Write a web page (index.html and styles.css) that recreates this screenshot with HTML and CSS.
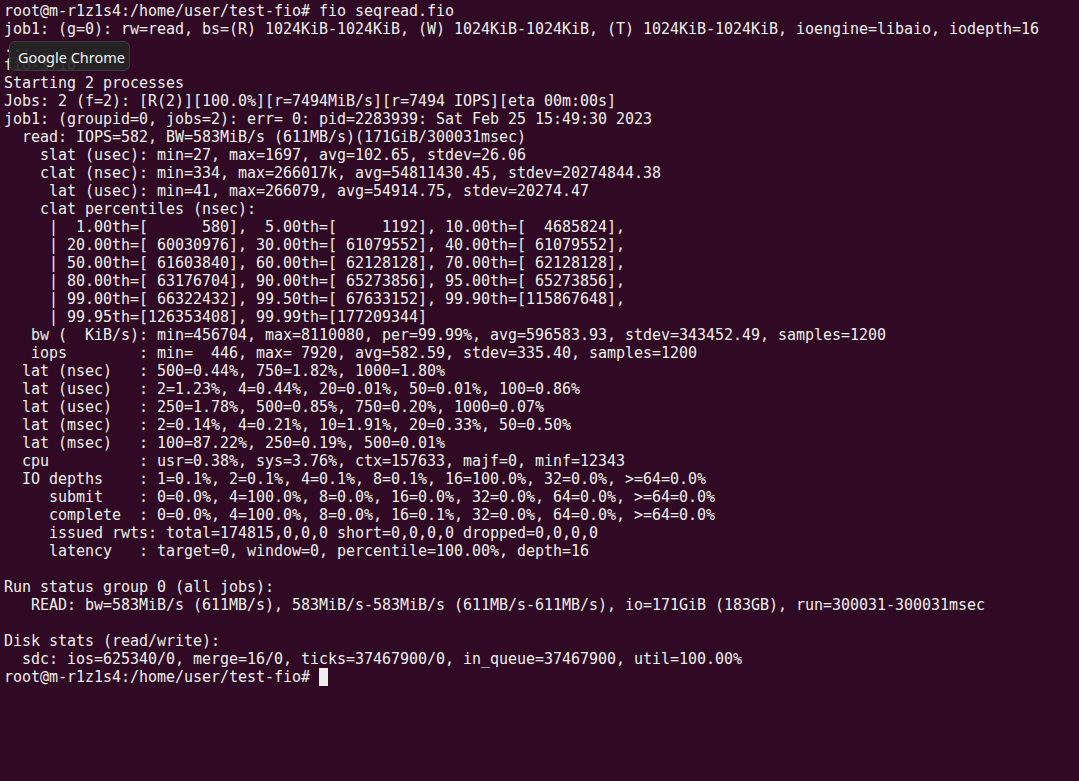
FILE: index.html
```html
<!DOCTYPE html>
<html lang="en">
<head>
<meta charset="utf-8">
<title>Terminal</title>
<link rel="stylesheet" href="styles.css">
</head>
<body>
<div class="terminal">
<pre class="output">root@m-r1z1s4:/home/user/test-fio# fio seqread.fio
job1: (g=0): rw=read, bs=(R) 1024KiB-1024KiB, (W) 1024KiB-1024KiB, (T) 1024KiB-1024KiB, ioengine=libaio, iodepth=16
...
fio-3.16
Starting 2 processes
Jobs: 2 (f=2): [R(2)][100.0%][r=7494MiB/s][r=7494 IOPS][eta 00m:00s]
job1: (groupid=0, jobs=2): err= 0: pid=2283939: Sat Feb 25 15:49:30 2023
  read: IOPS=582, BW=583MiB/s (611MB/s)(171GiB/300031msec)
    slat (usec): min=27, max=1697, avg=102.65, stdev=26.06
    clat (nsec): min=334, max=266017k, avg=54811430.45, stdev=20274844.38
     lat (usec): min=41, max=266079, avg=54914.75, stdev=20274.47
    clat percentiles (nsec):
     |  1.00th=[      580],  5.00th=[     1192], 10.00th=[  4685824],
     | 20.00th=[ 60030976], 30.00th=[ 61079552], 40.00th=[ 61079552],
     | 50.00th=[ 61603840], 60.00th=[ 62128128], 70.00th=[ 62128128],
     | 80.00th=[ 63176704], 90.00th=[ 65273856], 95.00th=[ 65273856],
     | 99.00th=[ 66322432], 99.50th=[ 67633152], 99.90th=[115867648],
     | 99.95th=[126353408], 99.99th=[177209344]
   bw (  KiB/s): min=456704, max=8110080, per=99.99%, avg=596583.93, stdev=343452.49, samples=1200
   iops        : min=  446, max= 7920, avg=582.59, stdev=335.40, samples=1200
  lat (nsec)   : 500=0.44%, 750=1.82%, 1000=1.80%
  lat (usec)   : 2=1.23%, 4=0.44%, 20=0.01%, 50=0.01%, 100=0.86%
  lat (usec)   : 250=1.78%, 500=0.85%, 750=0.20%, 1000=0.07%
  lat (msec)   : 2=0.14%, 4=0.21%, 10=1.91%, 20=0.33%, 50=0.50%
  lat (msec)   : 100=87.22%, 250=0.19%, 500=0.01%
  cpu          : usr=0.38%, sys=3.76%, ctx=157633, majf=0, minf=12343
  IO depths    : 1=0.1%, 2=0.1%, 4=0.1%, 8=0.1%, 16=100.0%, 32=0.0%, &gt;=64=0.0%
     submit    : 0=0.0%, 4=100.0%, 8=0.0%, 16=0.0%, 32=0.0%, 64=0.0%, &gt;=64=0.0%
     complete  : 0=0.0%, 4=100.0%, 8=0.0%, 16=0.1%, 32=0.0%, 64=0.0%, &gt;=64=0.0%
     issued rwts: total=174815,0,0,0 short=0,0,0,0 dropped=0,0,0,0
     latency   : target=0, window=0, percentile=100.00%, depth=16

Run status group 0 (all jobs):
   READ: bw=583MiB/s (611MB/s), 583MiB/s-583MiB/s (611MB/s-611MB/s), io=171GiB (183GB), run=300031-300031msec

Disk stats (read/write):
  sdc: ios=625340/0, merge=16/0, ticks=37467900/0, in_queue=37467900, util=100.00%
root@m-r1z1s4:/home/user/test-fio# <span class="cursor"></span></pre>
<div class="tooltip">Google Chrome</div>
</div>
</body>
</html>
```
FILE: styles.css
```css
html, body {
  margin: 0;
  padding: 0;
  background: #300a24;
  height: 100%;
  overflow: hidden;
}

.terminal {
  position: relative;
  height: 100%;
  padding: 2px 4px 0;
  box-sizing: border-box;
}

.output {
  margin: 0;
  font-family: "DejaVu Sans Mono", "Liberation Mono", monospace;
  font-size: 15px;
  letter-spacing: -0.03px;
  line-height: 18px;
  color: #eeeeec;
  white-space: pre;
}

.cursor {
  display: inline-block;
  width: 9px;
  height: 18px;
  background: #eeeeec;
  vertical-align: top;
}

.tooltip {
  position: absolute;
  left: 9px;
  top: 41px;
  width: 121px;
  height: 30px;
  box-sizing: border-box;
  border: 1px solid #3c3c3c;
  border-radius: 6px;
  background: rgba(38, 38, 38, 0.92);
  color: #f3f3f3;
  font-family: "Noto Sans", "Open Sans", sans-serif;
  font-size: 14.5px;
  line-height: 30px;
  padding-left: 8px;
}
```
